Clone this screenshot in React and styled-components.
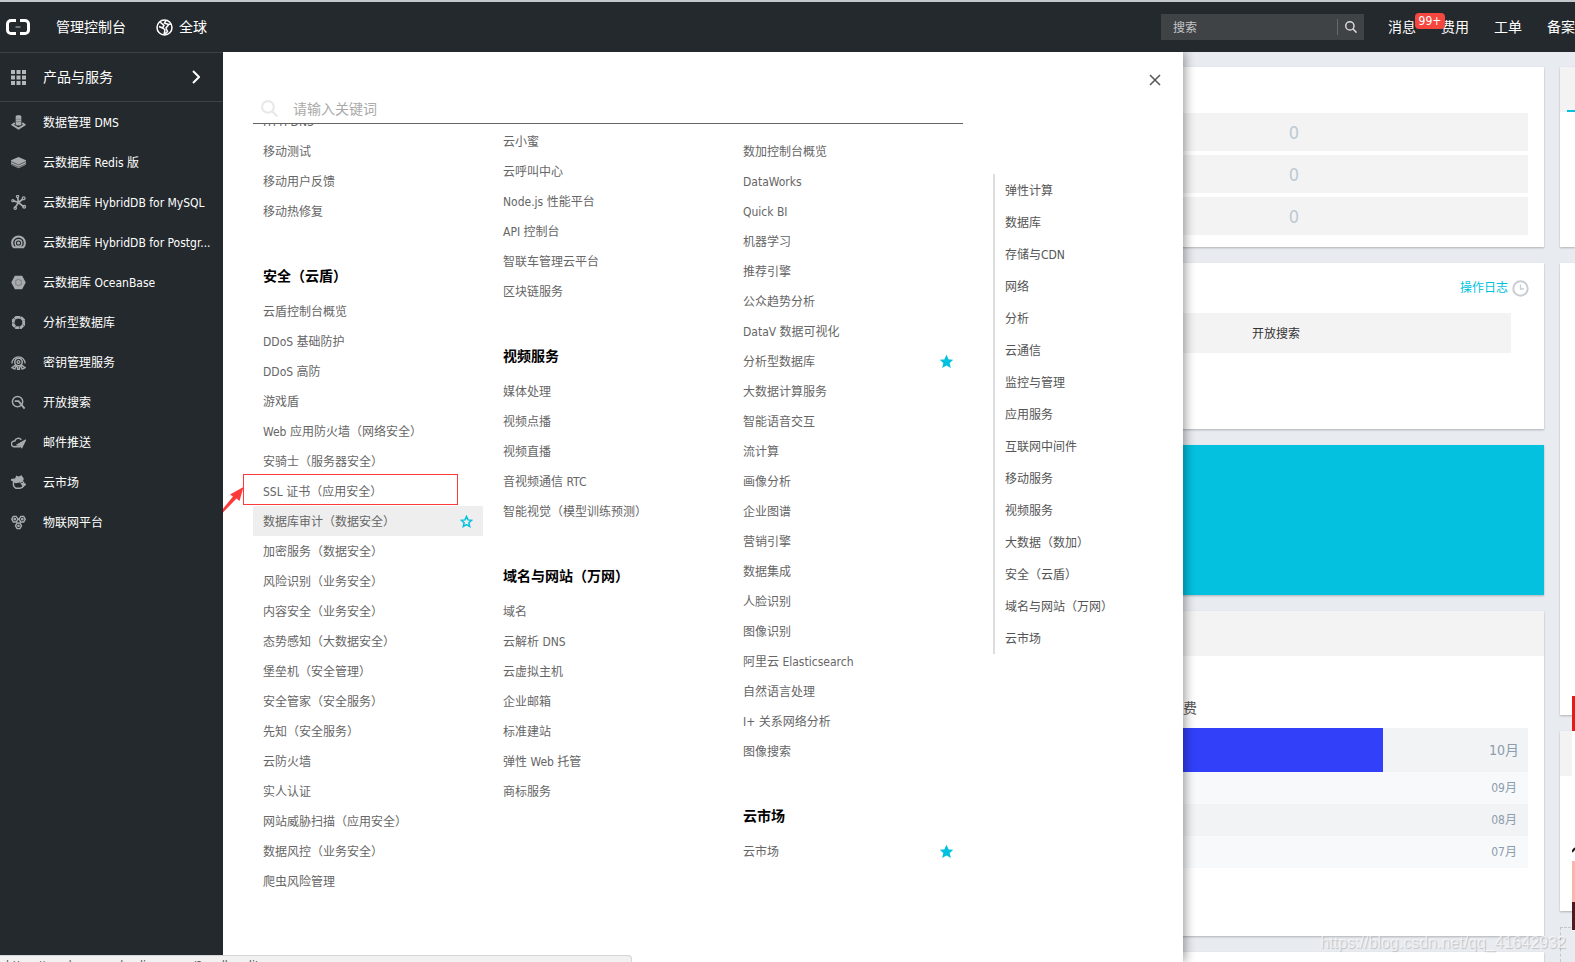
import React from "react";
import styled, { createGlobalStyle } from "styled-components";

const menuIcons = {
  dms: (
    <>
      <path d="M5 1.500C5 0 11 0 11 1.500V10c0 1.500-6 1.500-6 0z" fill="currentColor" stroke="none" />
      <path d="M4 8.500 1.500 10.500l6.500 4 6.500-4L12 8.500" strokeWidth="2" />
      <path d="M5 4.500h6M5 7h6" stroke="#6d7173" strokeWidth=".7" />
    </>
  ),
  redis: (
    <>
      <path d="M0 5.500 8 2l8 3.500v5L8 14l-8-3.500z" fill="currentColor" stroke="none" />
      <path d="m0 7 8 3.500L16 7M0 9.500 8 13l8-3.500" stroke="#4b4f52" strokeWidth=".9" />
    </>
  ),
  mysql: (
    <>
      <path d="M8 8 2 6M8 8l5-4M8 8l6 5M8 8l-4 6M8 8 7 2" strokeWidth="1.800" />
      <circle cx="2" cy="6" r="1.200" />
      <circle cx="13.500" cy="3.500" r="1.500" />
      <circle cx="14" cy="12.500" r="1.500" />
      <circle cx="4.500" cy="14" r="1.300" />
      <circle cx="7" cy="1.500" r="1.200" />
    </>
  ),
  postgre: (
    <>
      <path d="M3 13A6.800 6.800 0 1 1 13 13z" strokeWidth="2.200" />
      <circle cx="8" cy="8.500" r="3.500" strokeWidth="1.500" />
      <circle cx="8" cy="8.500" r="1" fill="currentColor" />
    </>
  ),
  ocean: (
    <>
      <path d="M4.500 1.500h7L15 8l-3.500 6.500h-7L1 8z" fill="currentColor" />
      <path d="M8 4.500 11 6v4l-3 1.500L5 10V6z" stroke="#85888a" />
    </>
  ),
  analytic: <path d="M5.500 2.500h5l3 3v5l-3 3h-5l-3-3v-5z" strokeWidth="3" strokeDasharray="4.500 .5" />,
  key: (
    <>
      <path d="M1 9a7 7 0 1 1 14 0" />
      <circle cx="8" cy="7.500" r="4" strokeWidth="1.600" />
      <circle cx="8" cy="7.500" r="1.500" />
      <path d="m5 10.500-4 3 3 1.500 2-4M11 10.500l4 3-3 1.500-2-4M7 12v3.500h2V12" strokeWidth="1.500" />
    </>
  ),
  search: (
    <>
      <circle cx="7" cy="7" r="5.500" strokeWidth="1.600" />
      <path d="m10 9 4.500 5.500M4 6.500h4l2.500 3" strokeWidth="2" />
    </>
  ),
  mail: (
    <>
      <path d="M11 5A4 4 0 0 0 4 6.500a3 3 0 0 0-1 6h7" strokeWidth="1.600" />
      <path d="m15.500 5.500-9 5 3 .5 2 2.500z" fill="currentColor" />
    </>
  ),
  market: (
    <>
      <path d="M4 6a5 5 0 0 0 1 8h5a4.500 4.500 0 0 0 3-7" strokeWidth="1.600" />
      <path d="m0 5 5-1 1-2.500 2 1 3-1.500 2 3-1 3-7 1zM11 9l5 1-3 2z" fill="currentColor" />
    </>
  ),
  iot: (
    <>
      <path d="M2.500 1.500h3L7.500 4.500 5.500 7.500h-3L.8 4.500zM10.500 1.500h3L15.200 4.500 13.500 7.500h-3L8.500 4.500zM6.500 8.500h3l1.700 3L9.500 14.500h-3L4.800 11.500z" strokeWidth="1.500" />
      <circle cx="4" cy="4.500" r=".8" />
      <circle cx="12" cy="4.500" r=".8" />
      <circle cx="8" cy="11.500" r=".8" />
    </>
  ),
};

const products = [
  ["dms", "数据管理 DMS"],
  ["redis", "云数据库 Redis 版"],
  ["mysql", "云数据库 HybridDB for MySQL"],
  ["postgre", "云数据库 HybridDB for Postgr..."],
  ["ocean", "云数据库 OceanBase"],
  ["analytic", "分析型数据库"],
  ["key", "密钥管理服务"],
  ["search", "开放搜索"],
  ["mail", "邮件推送"],
  ["market", "云市场"],
  ["iot", "物联网平台"],
];

// scroll: how far the first row of a column sits from the top of the list
const columns = [
  {
    scroll: -18,
    groups: [
      { items: ["HTTPDNS", "移动测试", "移动用户反馈", "移动热修复"] },
      {
        title: "安全（云盾）",
        items: [
          "云盾控制台概览",
          "DDoS 基础防护",
          "DDoS 高防",
          "游戏盾",
          "Web 应用防火墙（网络安全）",
          "安骑士（服务器安全）",
          "SSL 证书（应用安全）",
          "数据库审计（数据安全）",
          "加密服务（数据安全）",
          "风险识别（业务安全）",
          "内容安全（业务安全）",
          "态势感知（大数据安全）",
          "堡垒机（安全管理）",
          "安全管家（安全服务）",
          "先知（安全服务）",
          "云防火墙",
          "实人认证",
          "网站威胁扫描（应用安全）",
          "数据风控（业务安全）",
          "爬虫风险管理",
        ],
      },
    ],
  },
  {
    scroll: 2,
    groups: [
      { items: ["云小蜜", "云呼叫中心", "Node.js 性能平台", "API 控制台", "智联车管理云平台", "区块链服务"] },
      {
        title: "视频服务",
        items: ["媒体处理", "视频点播", "视频直播", "音视频通信 RTC", "智能视觉（模型训练预测）"],
      },
      {
        title: "域名与网站（万网）",
        items: ["域名", "云解析 DNS", "云虚拟主机", "企业邮箱", "标准建站", "弹性 Web 托管", "商标服务"],
      },
    ],
  },
  {
    scroll: 12,
    groups: [
      {
        items: [
          "数加控制台概览",
          "DataWorks",
          "Quick BI",
          "机器学习",
          "推荐引擎",
          "公众趋势分析",
          "DataV 数据可视化",
          "分析型数据库",
          "大数据计算服务",
          "智能语音交互",
          "流计算",
          "画像分析",
          "企业图谱",
          "营销引擎",
          "数据集成",
          "人脸识别",
          "图像识别",
          "阿里云 Elasticsearch",
          "自然语言处理",
          "I+ 关系网络分析",
          "图像搜索",
        ],
      },
      { title: "云市场", items: ["云市场"] },
    ],
  },
];

const starred = ["分析型数据库", "云市场"];
const hovered = "数据库审计（数据安全）";
const marked = "SSL 证书（应用安全）";

const anchors = [
  "弹性计算",
  "数据库",
  "存储与CDN",
  "网络",
  "分析",
  "云通信",
  "监控与管理",
  "应用服务",
  "互联网中间件",
  "移动服务",
  "视频服务",
  "大数据（数加）",
  "安全（云盾）",
  "域名与网站（万网）",
  "云市场",
];

const months = ["10月", "09月", "08月", "07月"];

function Star({ filled }) {
  return (
    <svg width="13" height="13" viewBox="0 0 13 13" aria-hidden="true">
      <path
        d="M6.500 1.500 8 4.900l3.600.4L8.900 7.800l.8 3.600-3.200-1.900-3.200 1.900.8-3.600L1.400 5.300 5 4.900z"
        fill={filled ? "#00c1de" : "none"}
        stroke="#00c1de"
        strokeWidth="1.500"
      />
    </svg>
  );
}

function Magnifier({ size, width = 1.5 }) {
  return (
    <svg width={size} height={size} viewBox="0 0 16 16" fill="none" stroke="currentColor" strokeWidth={width} aria-hidden="true">
      <circle cx="6.500" cy="6.500" r="5.500" />
      <path d="m10.500 10.500 5 5" />
    </svg>
  );
}

function ProductRow({ name }) {
  const isHovered = name === hovered;
  const isStarred = starred.includes(name);
  return (
    <Row $active={isHovered}>
      <a href="#product">{name}</a>
      {(isHovered || isStarred) && (
        <StarButton aria-label="收藏">
          <Star filled={isStarred} />
        </StarButton>
      )}
      {name === marked && (
        <Marker>
          <svg width="24" height="28" viewBox="0 0 24 28" aria-hidden="true">
            <path d="M0 26.500 13 10.500 10 8.500 23.500 1l-4 14-3-2.500L1.500 28z" fill="#fb3a39" />
          </svg>
        </Marker>
      )}
    </Row>
  );
}

export default function App() {
  return (
    <Page>
      <GlobalStyle />
      <Header>
        <Logo href="#home" aria-label="首页">
          <svg width="24" height="16" viewBox="0 0 24 16" fill="none" stroke="#fff" strokeWidth="3" aria-hidden="true">
            <path d="M10 1.500H5A3.500 3.500 0 0 0 1.500 5v6A3.500 3.500 0 0 0 5 14.500h5M14 1.500h5A3.500 3.500 0 0 1 22.500 5v6a3.500 3.500 0 0 1-3.500 3.500h-5" />
            <path d="M9.500 8h5" stroke="#8d9092" strokeWidth="1.500" />
          </svg>
        </Logo>
        <HeaderLink href="#console">管理控制台</HeaderLink>
        <Region>
          <svg width="17" height="17" viewBox="0 0 17 17" fill="none" stroke="#fff" strokeWidth="1.500" aria-hidden="true">
            <circle cx="8.500" cy="8.500" r="7.500" />
            <path d="M4 3l4 3.500L6.500 9 3 7.500M7 9l2 2-1 4.500M10 1.500 8.500 4l4 1.500L15 5M12.500 6 10 9l1.500 3.500L9 15" />
          </svg>
          全球
        </Region>
        <HeaderSearch>
          <input aria-label="搜索" placeholder="搜索" />
          <button aria-label="搜索">
            <Magnifier size={12} width={2} />
          </button>
        </HeaderSearch>
        <HeaderNav>
          <HeaderLink href="#message">
            消息<Badge>99+</Badge>
          </HeaderLink>
          <HeaderLink href="#cost">费用</HeaderLink>
          <HeaderLink href="#ticket">工单</HeaderLink>
          <HeaderLink href="#record">备案</HeaderLink>
        </HeaderNav>
      </Header>

      <Body>
        <Sidebar>
          <SidebarTitle>
            <svg width="15" height="15" viewBox="0 0 15 15" fill="#b4b7b9" aria-hidden="true">
              <path d="M0 0h4v4H0zM5.500 0h4v4h-4zM11 0h4v4h-4zM0 5.500h4v4H0zM5.500 5.500h4v4h-4zM11 5.500h4v4h-4zM0 11h4v4H0zM5.500 11h4v4h-4zM11 11h4v4h-4z" />
            </svg>
            <span>产品与服务</span>
            <svg width="8" height="14" viewBox="0 0 8 14" fill="none" stroke="#fff" strokeWidth="2" aria-hidden="true">
              <path d="m1 1 6 6-6 6" />
            </svg>
          </SidebarTitle>
          {products.map(([icon, name]) => (
            <SidebarItem href="#product" key={name}>
              <svg width="15" height="15" viewBox="0 0 16 16" fill="none" stroke="currentColor" strokeWidth="1.300" aria-hidden="true">
                {menuIcons[icon]}
              </svg>
              <span>{name}</span>
            </SidebarItem>
          ))}
        </Sidebar>

        <Main>
          <MainColumn>
            <Card $height={180}>
              <Counts>
                {[0, 1, 2].map((n) => (
                  <Split key={n} $tail={468}>
                    <b>0</b>
                  </Split>
                ))}
              </Counts>
            </Card>
            <Card $height={166}>
              <LogLink href="#log">
                操作日志
                <svg width="17" height="17" viewBox="0 0 17 17" fill="none" stroke="#c9cdd2" strokeWidth="2" aria-hidden="true">
                  <circle cx="8.500" cy="8.500" r="7.200" />
                  <path d="M8.500 4.500v4.500h3.500" strokeWidth="1.300" />
                </svg>
              </LogLink>
              <Recent>
                <Split $tail={470}>
                  <span>开放搜索</span>
                </Split>
              </Recent>
            </Card>
            <Card $height={150} $color="#04c1df" />
            <Card $height={325}>
              <CardHead />
              <Bill>
                <Caption>费</Caption>
                {months.map((month, i) => (
                  <Month key={month} $first={i === 0}>
                    {i === 0 && <Bar />}
                    <span>{month}</span>
                  </Month>
                ))}
              </Bill>
            </Card>
            <Card $height={180} />
          </MainColumn>
          <SideColumn>
            <Card $height={180}>
              <CardHead>
                <Tab />
              </CardHead>
            </Card>
            <Card $height={452} />
            <Card $height={180}>
              <CardHead />
            </Card>
            <Dashed />
          </SideColumn>
        </Main>

        <Drawer>
          <CloseButton aria-label="关闭">
            <svg width="12" height="12" viewBox="0 0 12 12" stroke="#555" strokeWidth="1.500" aria-hidden="true">
              <path d="m1 1 10 10M11 1 1 11" />
            </svg>
          </CloseButton>
          <DrawerContent>
            <Catalog>
              <Keyword>
                <Magnifier size={17} width={2} />
                <input aria-label="关键词" placeholder="请输入关键词" />
              </Keyword>
              <Columns>
                {columns.map(({ scroll, groups }) => (
                  <Column key={scroll} $scroll={scroll}>
                    {groups.map(({ title, items }) => (
                      <section key={items[0]}>
                        {title && <GroupTitle>{title}</GroupTitle>}
                        <ul>
                          {items.map((name) => (
                            <ProductRow key={name} name={name} />
                          ))}
                        </ul>
                      </section>
                    ))}
                  </Column>
                ))}
              </Columns>
            </Catalog>
            <Anchors>
              {anchors.map((name) => (
                <a href="#group" key={name}>
                  {name}
                </a>
              ))}
            </Anchors>
          </DrawerContent>
        </Drawer>
      </Body>

      <Floating>
        <svg width="3" height="235" viewBox="0 0 3 235" aria-hidden="true">
          <path d="M0 0h3v35H0z" fill="#e61a17" />
          <path d="M0 35h3v200H0z" fill="#fff" />
          <path d="m0 156 3-4" stroke="#111" strokeWidth="2" />
          <path d="M0 165h3v41H0z" fill="#f8b5ac" />
          <path d="M0 206h3v28H0z" fill="#4f1a20" />
        </svg>
      </Floating>
      <Watermark>https://blog.csdn.net/qq_41642932</Watermark>
      <StatusBar>https://yundun.console.aliyun.com/?p=dbaudit</StatusBar>
    </Page>
  );
}

const GlobalStyle = createGlobalStyle`
  * {
    box-sizing: border-box;
  }
  body {
    margin: 0;
    font: 12px/16px "DejaVu Sans Condensed", "Noto Sans CJK SC", sans-serif;
  }
  a {
    color: inherit;
    text-decoration: none;
  }
  ul {
    margin: 0;
    padding: 0;
    list-style: none;
  }
  button, input {
    padding: 0;
    border: 0;
    background: none;
    font: inherit;
    outline: none;
  }
`;

const Page = styled.div`
  position: relative;
  display: flex;
  flex-direction: column;
  height: 100vh;
  overflow: hidden;
  background: #e8ebf0;
`;

const Header = styled.header`
  display: flex;
  align-items: center;
  height: 52px;
  flex-shrink: 0;
  border-top: 2px solid #c3c8cb;
  background: #24292d;
  color: #fff;
  font-size: 14px;
  white-space: nowrap;
`;

const Logo = styled.a`
  display: flex;
  margin: 0 26px 0 6px;
`;

const HeaderLink = styled.a`
  position: relative;
`;

const Region = styled.button`
  display: flex;
  align-items: center;
  gap: 6px;
  margin-left: 30px;
  color: #fff;
`;

const HeaderSearch = styled.form`
  display: flex;
  align-items: center;
  width: 203px;
  height: 26px;
  margin: 0 24px 0 auto;
  background: #404346;
  font-size: 12px;
  input {
    flex: 1;
    min-width: 0;
    padding: 2px 0 0 12px;
    color: #fff;
  }
  input::placeholder {
    color: #c4c5c6;
    opacity: 1;
  }
  button {
    display: flex;
    align-items: center;
    justify-content: center;
    width: 27px;
    height: 16px;
    border-left: 1px solid #66696b;
    color: #d8d9da;
  }
`;

const HeaderNav = styled.nav`
  display: flex;
  gap: 25px;
`;

const Badge = styled.span`
  position: absolute;
  z-index: 1;
  left: 27px;
  top: -6px;
  width: 30px;
  border-radius: 4px;
  background: #f5473f;
  font-size: 12px;
  line-height: 16px;
  text-align: center;
`;

const Body = styled.div`
  position: relative;
  display: flex;
  flex: 1;
  min-height: 0;
`;

const Sidebar = styled.nav`
  width: 223px;
  flex-shrink: 0;
  background: #24292d;
  color: #fff;
`;

const SidebarTitle = styled.div`
  display: flex;
  align-items: center;
  height: 50px;
  padding: 0 23px 0 11px;
  border: solid #3d4144;
  border-width: 1px 0;
  font-size: 14px;
  span {
    flex: 1;
    padding-left: 17px;
  }
`;

const SidebarItem = styled.a`
  display: flex;
  align-items: center;
  gap: 17px;
  height: 40px;
  padding: 0 8px 0 11px;
  svg {
    flex-shrink: 0;
    color: #a9acae;
  }
  span {
    padding-top: 2px;
    overflow: hidden;
    text-overflow: ellipsis;
    white-space: nowrap;
  }
`;

const Main = styled.main`
  display: flex;
  flex: 1;
  gap: 16px;
  min-width: 0;
  padding: 15px 0 0 24px;
  overflow: hidden;
`;

const MainColumn = styled.div`
  display: flex;
  flex: 1;
  flex-direction: column;
  gap: 16px;
`;

const SideColumn = styled.div`
  display: flex;
  flex-direction: column;
  gap: 16px;
  width: 15px;
`;

const Card = styled.section`
  height: ${({ $height }) => $height}px;
  flex-shrink: 0;
  background: ${({ $color }) => $color || "#fff"};
  box-shadow: 0 1px 2px rgba(0, 0, 0, 0.25);
`;

const CardHead = styled.header`
  display: flex;
  align-items: flex-end;
  height: 45px;
  background: #f3f3f3;
`;

const Tab = styled.div`
  flex: 1;
  height: 2px;
  margin-left: 7px;
  background: #00c1de;
`;

const Counts = styled.div`
  display: grid;
  gap: 4px;
  padding: 46px 16px 0;
`;

const Split = styled.div`
  display: grid;
  grid-template-columns: 1fr ${({ $tail }) => $tail}px;
  align-items: center;
  height: 38px;
  padding-top: 2px;
  background: #f3f3f3;
  text-align: center;
  b {
    grid-column: 2;
    color: #bccad4;
    font-size: 18px;
    font-weight: 400;
  }
  span {
    grid-column: 2;
    color: #333;
  }
`;

const LogLink = styled.a`
  display: flex;
  align-items: center;
  justify-content: flex-end;
  gap: 4px;
  height: 50px;
  padding-right: 15px;
  color: #00c1de;
`;

const Recent = styled.div`
  padding: 0 33px 0 16px;
  ${Split} {
    height: 40px;
  }
`;

const Bill = styled.div`
  padding: 36px 16px 0;
`;

const Caption = styled.div`
  padding: 0 331px 4px 0;
  color: #555;
  font-size: 14px;
  line-height: 32px;
  text-align: right;
`;

const Month = styled.div`
  display: flex;
  align-items: center;
  justify-content: flex-end;
  height: ${({ $first }) => ($first ? 44 : 32)}px;
  padding-right: ${({ $first }) => ($first ? 9 : 11)}px;
  background: #f7f9fb;
  color: #8c9dad;
  font-size: ${({ $first }) => ($first ? 14 : 12)}px;
  &:nth-child(even) {
    background: #f2f3f5;
  }
  span {
    width: ${({ $first }) => ($first ? 136 : 26)}px;
    text-align: right;
  }
`;

const Bar = styled.div`
  flex: 1;
  align-self: stretch;
  background: #3240fa;
`;

const Dashed = styled.div`
  flex: 1;
  border: dashed #c4c6ca;
  border-width: 1px 0 0 1px;
`;

const Drawer = styled.div`
  position: absolute;
  top: 0;
  bottom: 0;
  left: 223px;
  width: 960px;
  background: #fff;
  box-shadow: 2px 0 10px rgba(0, 0, 0, 0.4);
  clip-path: inset(0 -20px 0 0);
  color: #666;
`;

const CloseButton = styled.button`
  display: flex;
  margin: 22px 22px 0 auto;
`;

const DrawerContent = styled.div`
  display: flex;
  gap: 30px;
  padding-left: 30px;
`;

const Catalog = styled.div`
  width: 710px;
`;

const Keyword = styled.label`
  display: flex;
  align-items: center;
  gap: 15px;
  height: 38px;
  padding: 8px 0 0 8px;
  border-bottom: 1px solid #666;
  color: #e6e8ea;
  font-size: 14px;
  input {
    flex: 1;
  }
  input::placeholder {
    color: #aaa;
    opacity: 1;
  }
`;

const Columns = styled.div`
  display: flex;
  gap: 10px;
  height: 800px;
  margin-left: -35px;
  padding-left: 35px;
  clip-path: inset(0);
`;

const Column = styled.div`
  width: 230px;
  margin-top: ${({ $scroll }) => $scroll}px;
`;

const GroupTitle = styled.h3`
  margin: 30px 0 0;
  padding-left: 10px;
  color: #000;
  font-size: 14px;
  line-height: 40px;
`;

const Row = styled.li`
  position: relative;
  display: flex;
  align-items: center;
  justify-content: space-between;
  height: 30px;
  padding: 0 10px;
  background: ${({ $active }) => ($active ? "#eee" : "none")};
  white-space: nowrap;
  a {
    padding-top: 2px;
  }
`;

const StarButton = styled.button`
  display: flex;
`;

const Marker = styled.div`
  position: absolute;
  inset: -2px 25px 1px -10px;
  border: 1px solid #fb3a39;
  svg {
    position: absolute;
    right: 100%;
    top: 11px;
  }
`;

const Anchors = styled.nav`
  display: flex;
  flex-direction: column;
  align-self: flex-start;
  margin-top: 88px;
  padding-left: 10px;
  border-left: 2px solid #ddd;
  color: #555;
  a {
    padding-top: 2px;
    line-height: 30px;
  }
`;

const Floating = styled.aside`
  position: absolute;
  right: 0;
  top: 696px;
  display: flex;
`;

const Watermark = styled.div`
  position: absolute;
  right: 9px;
  bottom: 9px;
  color: rgba(255, 255, 255, 0.6);
  font: 16px/20px "Liberation Sans", sans-serif;
  text-shadow: 1px 1px 1px rgba(0, 0, 0, 0.18);
`;

const StatusBar = styled.div`
  position: absolute;
  left: 0;
  bottom: 0;
  width: 632px;
  height: 7px;
  padding: 2px 6px 0;
  overflow: hidden;
  border: solid #d5d5d5;
  border-width: 1px 1px 0 0;
  border-radius: 0 4px 0 0;
  background: #f1f1f1;
  color: #555;
  line-height: 16px;
`;
